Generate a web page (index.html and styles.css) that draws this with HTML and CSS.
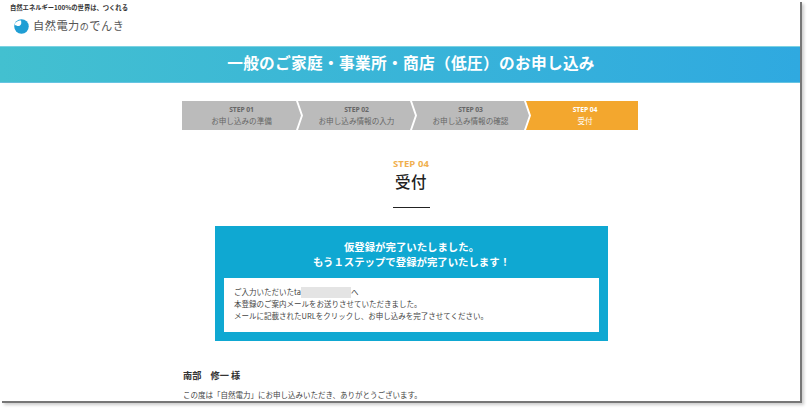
FILE: index.html
```html
<!DOCTYPE html>
<html lang="ja">
<head>
<meta charset="utf-8">
<title>受付</title>
<link rel="stylesheet" href="styles.css">
</head>
<body>
<div class="page">
  <header class="header">
    <p class="tagline">自然エネルギー100%の世界は、つくれる</p>
    <div class="logo">
      <svg class="logo-mark" width="15" height="15" viewBox="0 0 30 30" aria-hidden="true">
        <circle cx="15" cy="15" r="14.5" fill="#1f9ed4"/>
        <path d="M1 11C5 14 9 15 12 13C15 11 15 7 14 3C10 3 8 4 6 5Q3 7 1 11Z" fill="#fff"/>
      </svg>
      <span class="logo-text">自然電力<small>の</small>でんき</span>
    </div>
  </header>
  <div class="banner"><h1>一般のご家庭・事業所・商店（低圧）のお申し込み</h1></div>
  <ol class="steps">
    <li class="step first"><b>STEP 01</b><span>お申し込みの準備</span></li>
    <li class="step"><b>STEP 02</b><span>お申し込み情報の入力</span></li>
    <li class="step"><b>STEP 03</b><span>お申し込み情報の確認</span></li>
    <li class="step current"><b>STEP 04</b><span>受付</span></li>
  </ol>
  <div class="heading">
    <p class="eyebrow">STEP 04</p>
    <h2>受付</h2>
    <div class="rule"></div>
  </div>
  <section class="notice">
    <h3>仮登録が完了いたしました。<br>もう１ステップで登録が完了いたします！</h3>
    <div class="notice-body">
      <p>ご入力いただいたta<span class="mask"></span>へ</p>
      <p>本登録のご案内メールをお送りさせていただきました。</p>
      <p>メールに記載されたURLをクリックし、お申し込みを完了させてください。</p>
    </div>
  </section>
  <section class="message">
    <p class="name">南部　修一 様</p>
    <p class="thanks">この度は「自然電力」にお申し込みいただき、ありがとうございます。</p>
  </section>
</div>
</body>
</html>
```
FILE: styles.css
```css
* { box-sizing: border-box; }
html, body { margin: 0; padding: 0; background: #fff; }
body {
  width: 808px;
  height: 408px;
  overflow: hidden;
  font-family: "Noto Sans CJK JP", "Noto Sans", sans-serif;
  color: #333;
}
p, h1, h2, h3, ol { margin: 0; padding: 0; }
.page {
  width: 800px;
  height: 401px;
  overflow: hidden;
  background: #fff;
  box-shadow: 2px 2px 0 #777, 4px 4px 3px #ccc;
}
.header { height: 46px; padding: 4px 0 0 10px; }
.tagline { font-size: 6.3px; line-height: 8px; font-weight: 700; color: #333; }
.logo { display: flex; align-items: center; gap: 4px; margin: 5px 0 0 4px; height: 18px; }
.logo-mark { flex: none; }
.logo-text { font-size: 11.2px; line-height: 18px; letter-spacing: 0.5px; color: #555; font-weight: 400; }
.logo-text small { font-size: 9px; }
.banner {
  height: 37px;
  padding: 0 0 3px 22px;
  background: linear-gradient(90deg, #43c0d0, #2fa9e0);
  border-top: 1px solid #7cd2e2;
  border-bottom: 1px solid #66c4e2;
  display: flex;
  align-items: center;
  justify-content: center;
}
.banner h1 { color: #fff; font-size: 15.7px; font-weight: 700; line-height: 20px; letter-spacing: 0.3px; }
.steps { list-style: none; display: flex; width: 456px; height: 29px; margin: 18px 0 0 182px; }
.step {
  width: 117px;
  margin-right: -3px;
  flex: none;
  background: #bbb;
  color: #666;
  display: flex;
  flex-direction: column;
  align-items: center;
  clip-path: polygon(0 0, calc(100% - 5px) 0, 100% 50%, calc(100% - 5px) 100%, 0 100%, 5px 50%);
  padding-top: 4px;
  text-align: center;
}
.step.first { width: 119px; clip-path: polygon(0 0, calc(100% - 5px) 0, 100% 50%, calc(100% - 5px) 100%, 0 100%); }
.step.current {
  width: 112px;
  margin-right: 0;
  padding-left: 6px;
  background: #f3a72e;
  color: #fff;
  clip-path: polygon(0 0, 100% 0, 100% 100%, 0 100%, 5px 50%);
}
.step b { font-family: "Open Sans", sans-serif; font-size: 6.8px; line-height: 9px; font-weight: 700; letter-spacing: -0.1px; }
.step span { font-size: 7.6px; line-height: 12px; margin-top: 1px; }
.heading { display: flex; flex-direction: column; align-items: center; margin: 28px 0 0 22px; }
.eyebrow { font-family: "Open Sans", sans-serif; font-size: 9.5px; line-height: 12px; font-weight: 700; color: #f0b04f; letter-spacing: 0.1px; }
.heading h2 { font-size: 15.5px; line-height: 22px; font-weight: 500; color: #222; letter-spacing: 0.6px; }
.rule { width: 37px; height: 1px; background: #222; margin-top: 15px; }
.notice {
  width: 393px;
  height: 115px;
  margin: 18px 0 0 215px;
  background: #0fa8d2;
  padding: 13px 9px 0 9px;
}
.notice h3 { color: #fff; text-align: center; font-size: 10.4px; line-height: 15px; font-weight: 700; }
.notice-body { background: #fff; height: 54px; margin-top: 9px; padding: 8px 10px 0; }
.notice-body p { font-size: 7.5px; line-height: 12px; color: #444; display: flex; align-items: center; height: 12px; }
.mask { display: inline-block; width: 50px; height: 11px; background: #e4e4e4; }
.message { margin: 27px 0 0 183px; }
.name { font-size: 9.2px; line-height: 14px; font-weight: 700; color: #333; }
.thanks { font-size: 7.5px; line-height: 12px; color: #444; margin-top: 7px; }
```
